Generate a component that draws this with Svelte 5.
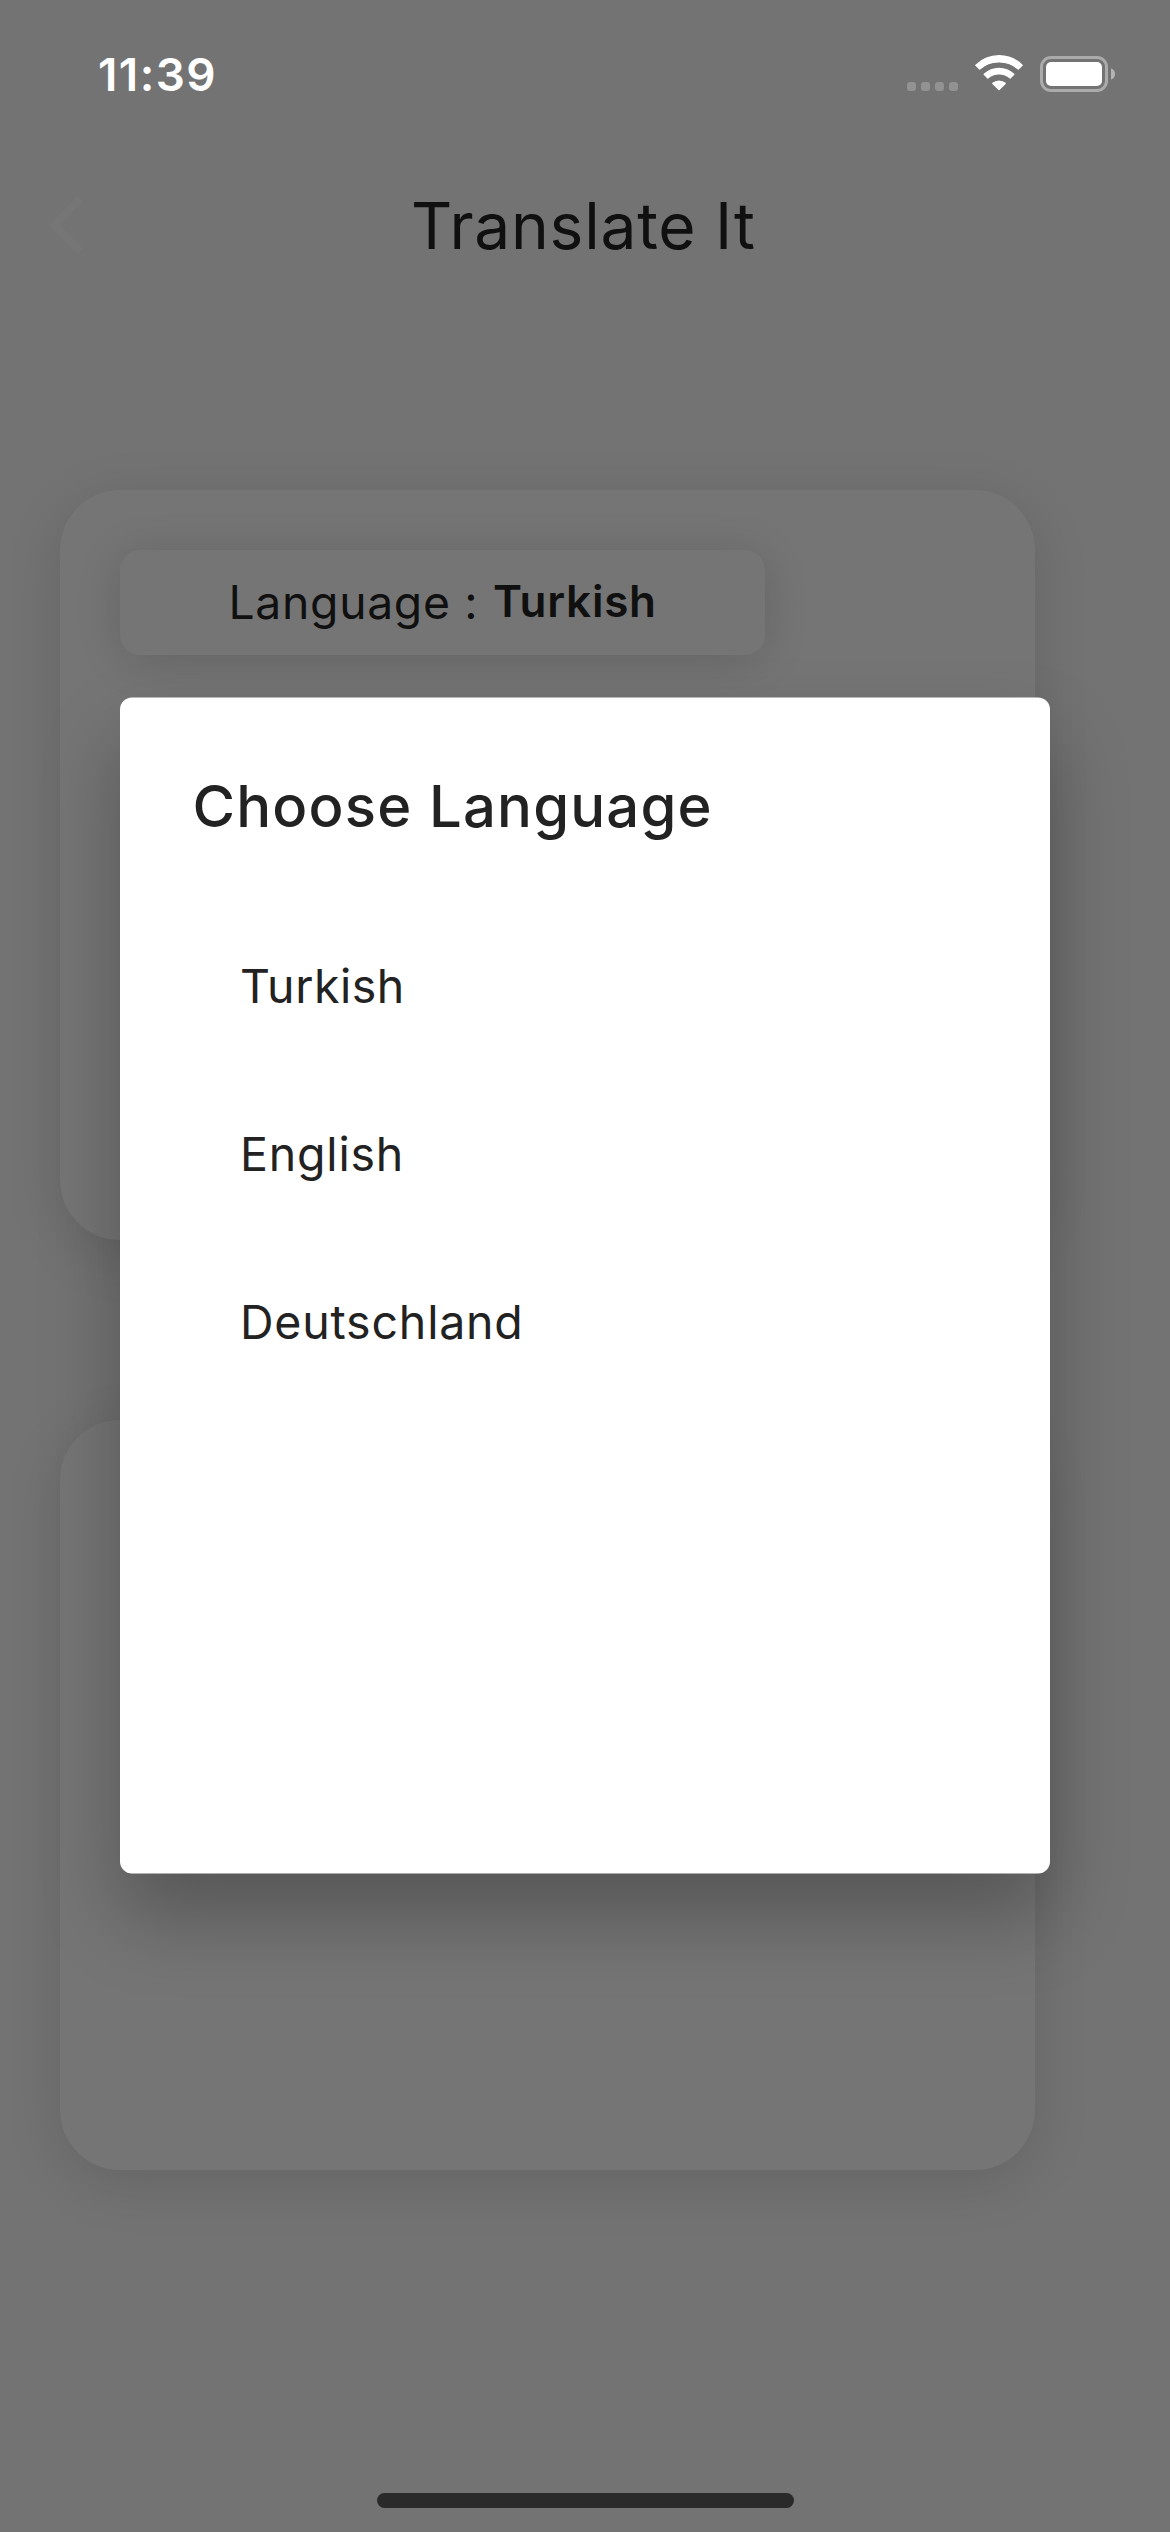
<script>
  const languages = ['Turkish', 'English', 'Deutschland'];
  let selected = $state('Turkish');
</script>

<div class="screen">
  <header class="status">
    <span class="time">11:39</span>
    <div class="indicators">
      <svg class="dots" width="51" height="9" viewBox="0 0 51 9" fill="#929292">
        <rect x="0" width="9" height="9" rx="3" />
        <rect x="14" width="9" height="9" rx="3" />
        <rect x="28" width="9" height="9" rx="3" />
        <rect x="42" width="9" height="9" rx="3" />
      </svg>
      <svg class="wifi" width="50" height="38" viewBox="0 0 50 38" fill="#fff" stroke="#fff" stroke-width="1.4" stroke-linejoin="round">
        <path d="M25 1.7A33.5 33.5 0 0 1 48.1 11.2L44.3 15.1A28 28 0 0 0 25 7.9A28 28 0 0 0 5.7 15.1L1.9 11.2A33.5 33.5 0 0 1 25 1.7Z" />
        <path d="M25 14.4A22 22 0 0 1 39.8 20.3L36.2 23.9A17.2 17.2 0 0 0 25 19.8A17.2 17.2 0 0 0 13.8 23.9L10.2 20.3A22 22 0 0 1 25 14.4Z" />
        <path d="M25 27.1A10 10 0 0 1 31.2 29.4L25 35.6L18.8 29.4A10 10 0 0 1 25 27.1Z" />
      </svg>
      <svg class="battery" width="75" height="36" viewBox="0 0 75 36">
        <rect x="1.5" y="1.5" width="65" height="33" rx="9.5" fill="none" stroke="#ababab" stroke-width="3" />
        <rect x="6" y="6" width="56" height="24" rx="5" fill="#fff" />
        <path d="M71 12.3Q75 14 75 18T71 23.7Z" fill="#b4b4b4" />
      </svg>
    </div>
  </header>

  <nav class="appbar">
    <svg class="back" width="36" height="60" viewBox="0 0 36 60" fill="none" stroke="#767676" stroke-width="8">
      <path d="M32.3 3.5L6.5 30L32.3 56.5" />
    </svg>
    <h1>Translate It</h1>
  </nav>

  <main>
    <section class="card">
      <button class="chip">
        <span class="label">Language :</span>
        <span class="value">{selected}</span>
      </button>
    </section>
    <section class="card"></section>
  </main>

  <div class="home"></div>

  <div class="dialog" role="dialog" aria-label="Choose Language">
    <h2>Choose Language</h2>
    <ul>
      {#each languages as language}
        <li><button class="option" onclick={() => (selected = language)}>{language}</button></li>
      {/each}
    </ul>
  </div>
</div>

<style>
  :global(body) {
    background: #737373;
  }
  .screen {
    position: relative;
    display: flex;
    flex-direction: column;
    box-sizing: border-box;
    width: 1170px;
    height: 2532px;
    overflow: hidden;
    background: #737373;
    color: #101010;
    font-family: Inter, 'Liberation Sans', sans-serif;
  }
  button {
    border: 0;
    font: inherit;
    color: inherit;
    text-align: left;
  }
  .status {
    display: flex;
    justify-content: space-between;
    height: 141px;
    padding: 0 55px 0 98px;
    box-sizing: border-box;
  }
  .time {
    padding-top: 45px;
    font-size: 45.8px;
    line-height: 60px;
    font-weight: 600;
    letter-spacing: 1.46px;
    color: #fff;
  }
  .indicators {
    display: flex;
    align-items: flex-start;
  }
  .dots {
    margin: 82px 16px 0 0;
  }
  .wifi {
    margin: 54px 16px 0 0;
  }
  .battery {
    margin-top: 56px;
  }
  .appbar {
    display: flex;
    align-items: center;
    height: 168px;
    padding-left: 48px;
  }
  .back {
    flex: none;
    margin-right: 327px;
  }
  h1 {
    margin: 0;
    font-size: 64px;
    line-height: 80px;
    font-weight: 400;
    letter-spacing: 0.77px;
    padding-top: 1px;
  }
  main {
    display: flex;
    flex-direction: column;
    gap: 180px;
    flex: 1;
    padding: 181px 135px 0 60px;
  }
  .card {
    height: 750px;
    padding: 60px;
    box-sizing: border-box;
    border-radius: 60px;
    background: #757575;
    box-shadow: 0 13px 56px rgba(0, 0, 0, 0.125);
  }
  .chip {
    display: flex;
    align-items: center;
    gap: 14.7px;
    width: 645px;
    height: 105px;
    padding: 0 0 2px 108.5px;
    border-radius: 20px;
    background: #757575;
    box-shadow: 0 5px 44px rgba(0, 0, 0, 0.15);
    white-space: nowrap;
  }
  .label {
    font-size: 46.3px;
    line-height: 56px;
    letter-spacing: 0.68px;
  }
  .value {
    padding-bottom: 2px;
    font-size: 44px;
    line-height: 56px;
    font-weight: 600;
    letter-spacing: 0.73px;
  }
  .home {
    align-self: center;
    flex: none;
    width: 417px;
    height: 15px;
    margin: 0 0 24px 1px;
    border-radius: 8px;
    background: #2a2a2a;
  }
  .dialog {
    position: absolute;
    top: 697px;
    left: 120px;
    width: 930px;
    height: 1176px;
    box-sizing: border-box;
    padding: 68px 72px 0;
    border-radius: 12px;
    background: #fff;
    box-shadow: 0 43px 78px rgba(0, 0, 0, 0.26);
    color: #222;
    transform: translateY(0.5px);
  }
  h2 {
    margin: 0;
    padding-left: 0.6px;
    font-size: 58px;
    line-height: 80px;
    font-weight: 500;
    letter-spacing: 1.17px;
  }
  ul {
    list-style: none;
    margin: 0;
    padding: 56px 0 0;
  }
  .option {
    display: block;
    width: 100%;
    height: 168px;
    padding: 0 48px;
    background: none;
    font-size: 46.5px;
    line-height: 60px;
    letter-spacing: 0.8px;
  }
  li:first-child .option {
    letter-spacing: 0.53px;
  }
</style>
